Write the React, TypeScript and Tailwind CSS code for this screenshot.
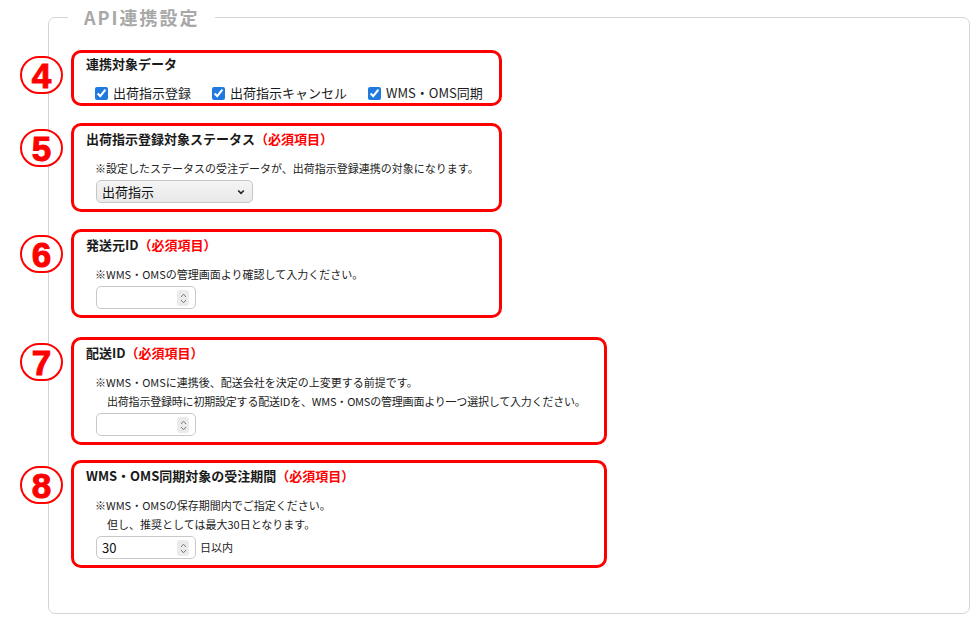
import React from 'react';

const jp = { fontFamily: '"Noto Sans CJK JP", "Noto Sans", sans-serif' };

const Circled: React.FC<{ n: number }> = ({ n }) => (
  <div className="absolute left-[-51px] top-[6px] w-[43px] h-[38px] rounded-full border-2 border-[#ff0000] bg-white flex items-center justify-center">
    <span
      className="text-[#ff0000] text-[35px] leading-none font-bold [-webkit-text-stroke:1px_#ff0000]"
      style={{ fontFamily: '"Liberation Sans", Arial, sans-serif' }}
    >
      {n}
    </span>
  </div>
);

const Required = () => <span className="text-[#ff0000]">（必須項目）</span>;

const Spinner = () => (
  <span className="absolute right-[6px] top-[3px] w-[12px] h-[16px] rounded-[3px] bg-[#ebebeb] flex flex-col items-center justify-center gap-[1px]">
    <svg width="7" height="5" viewBox="0 0 7 5" fill="none">
      <path d="M1 4L3.5 1.2L6 4" stroke="#7a7a7a" strokeWidth="1" />
    </svg>
    <svg width="7" height="5" viewBox="0 0 7 5" fill="none">
      <path d="M1 1L3.5 3.8L6 1" stroke="#7a7a7a" strokeWidth="1" />
    </svg>
  </span>
);

const NumberBox: React.FC<{ value?: string }> = ({ value }) => (
  <div className="relative w-[100px] h-[23px] rounded-[5px] border border-[#c8c8c8] bg-white">
    <span className="absolute left-[5px] top-[2px] text-[13px] leading-[18px] text-[#111]">{value}</span>
    <Spinner />
  </div>
);

const Check: React.FC<{ label: string }> = ({ label }) => (
  <label className="flex items-center gap-[5px]">
    <input type="checkbox" defaultChecked className="w-[13px] h-[13px] m-0 accent-[#1f7ae0]" />
    <span className="text-[13px] leading-[20px] text-[#1a1a1a]">{label}</span>
  </label>
);

const Box: React.FC<{ n: number; wide?: boolean; className?: string; children: React.ReactNode }> = ({
  n,
  wide,
  className = '',
  children,
}) => (
  <div className={`relative ${className}`}>
    <Circled n={n} />
    <div className={`${wide ? 'w-[536px]' : 'w-[431px]'} border-[3px] border-[#ff0000] rounded-[10px] pl-[12px] pr-[12px]`}>
      {children}
    </div>
  </div>
);

const Title: React.FC<{ children: React.ReactNode }> = ({ children }) => (
  <div className="text-[13px] leading-[18px] font-bold text-[#1a1a1a]">{children}</div>
);

const Note: React.FC<{ children: React.ReactNode; className?: string }> = ({ children, className = '' }) => (
  <div className={`ml-[9px] text-[11px] leading-[19px] text-[#222] whitespace-nowrap ${className}`}>{children}</div>
);

export default function App() {
  return (
    <div className="w-[980px] h-[630px] bg-white pl-[48px] pt-[5px]" style={jp}>
      <fieldset className="w-[922px] h-[609px] border border-[#d4d4d4] rounded-[7px] pl-[22px] pt-[21px] m-0">
        <legend className="ml-[-3px] px-[16px] text-[18px] leading-[24px] font-bold tracking-[2px] text-[#a8a8a8]">
          API連携設定
        </legend>

        <Box n={4}>
          <div className="pt-[2px]">
            <Title>連携対象データ</Title>
            <div className="mt-[10px] ml-[9px] flex items-center gap-[21px]">
              <Check label="出荷指示登録" />
              <Check label="出荷指示キャンセル" />
              <Check label="WMS・OMS同期" />
            </div>
          </div>
        </Box>

        <Box n={5} className="mt-[17px]">
          <div className="pt-[4px] pb-[6px]">
            <Title>
              出荷指示登録対象ステータス<Required />
            </Title>
            <Note className="mt-[11px]">※設定したステータスの受注データが、出荷指示登録連携の対象になります。</Note>
            <div className="relative mt-[2px] ml-[10px] w-[157px] h-[23px] rounded-[5px] border border-[#c6c6c6] bg-gradient-to-b from-[#f4f4f4] to-[#e9e9e9]">
              <span className="absolute left-[5px] top-[2px] text-[13px] leading-[18px] text-[#111]">出荷指示</span>
              <svg className="absolute right-[7px] top-[8px]" width="8" height="6" viewBox="0 0 8 6" fill="none">
                <path d="M1.2 1.5L4 4.3L6.8 1.5" stroke="#222" strokeWidth="1.6" />
              </svg>
            </div>
          </div>
        </Box>

        <Box n={6} className="mt-[17px]">
          <div className="pt-[4px] pb-[6px]">
            <Title>
              発送元ID<Required />
            </Title>
            <Note className="mt-[11px]">※WMS・OMSの管理画面より確認して入力ください。</Note>
            <div className="mt-[2px] ml-[10px]">
              <NumberBox />
            </div>
          </div>
        </Box>

        <Box n={7} wide className="mt-[19px]">
          <div className="pt-[4px] pb-[6px]">
            <Title>
              配送ID<Required />
            </Title>
            <Note className="mt-[11px]">※WMS・OMSに連携後、配送会社を決定の上変更する前提です。</Note>
            <Note className="pl-[12px] tracking-[-0.2px]">出荷指示登録時に初期設定する配送IDを、WMS・OMSの管理画面より一つ選択して入力ください。</Note>
            <div className="mt-[2px] ml-[10px]">
              <NumberBox />
            </div>
          </div>
        </Box>

        <Box n={8} wide className="mt-[15px]">
          <div className="pt-[4px] pb-[6px]">
            <Title>
              WMS・OMS同期対象の受注期間<Required />
            </Title>
            <Note className="mt-[11px]">※WMS・OMSの保存期間内でご指定ください。</Note>
            <Note className="pl-[12px]">但し、推奨としては最大30日となります。</Note>
            <div className="mt-[2px] ml-[10px] flex items-center gap-[4px]">
              <NumberBox value="30" />
              <span className="text-[11px] text-[#222]">日以内</span>
            </div>
          </div>
        </Box>
      </fieldset>
    </div>
  );
}
